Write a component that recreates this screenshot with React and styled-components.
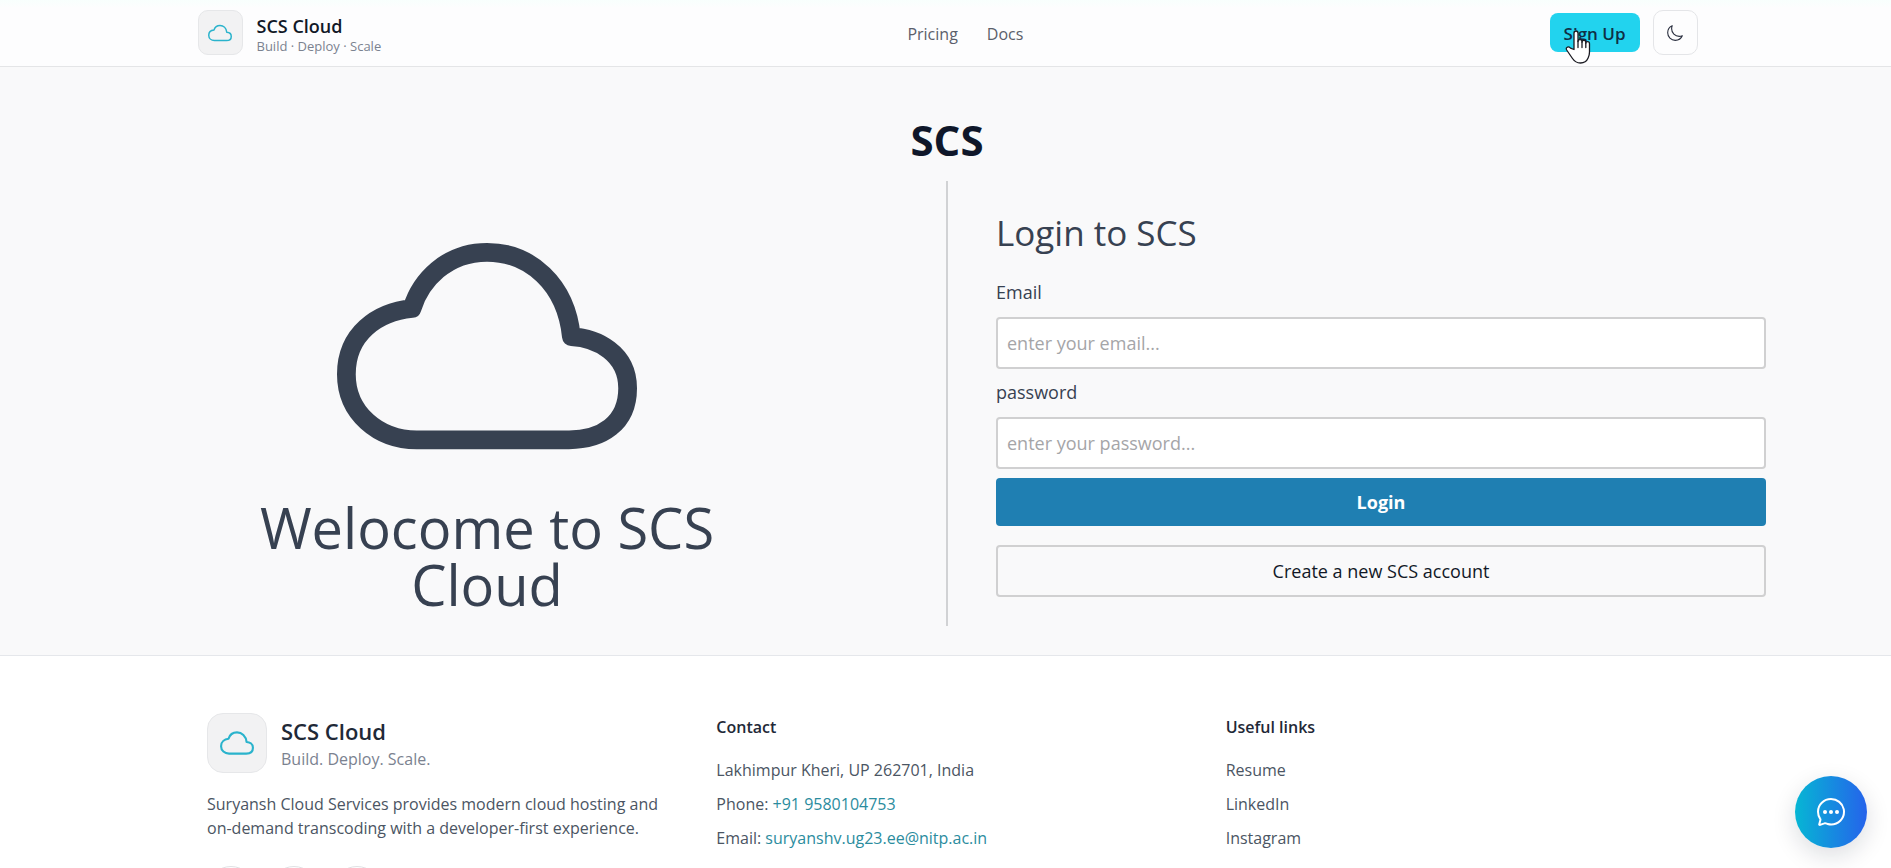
import React from "react";
import styled, { createGlobalStyle } from "styled-components";
import {
  IoCloudOutline,
  IoMoonOutline,
  IoChatbubbleEllipsesOutline,
  IoLogoGithub,
  IoLogoLinkedin,
  IoLogoInstagram,
} from "react-icons/io5";

const GlobalStyle = createGlobalStyle`
  *, *::before, *::after { box-sizing: border-box; }
  body {
    margin: 0;
    background: #ffffff;
    color: #374151;
    font-family: "Segoe UI", "Open Sans", "Noto Sans", sans-serif;
    font-size: 16px;
  }
  h1, h2, h3, p, ul { margin: 0; padding: 0; }
  a { color: inherit; text-decoration: none; }
  button, input { font-family: inherit; }
`;

const Header = styled.header`
  padding: 10px 0 11px 4px;
  background: linear-gradient(#f8fffd 0, #fdfdfe 8px);
  border-bottom: 1px solid #e4e5e7;
`;

const HeaderInner = styled.div`
  display: flex;
  align-items: center;
  justify-content: space-between;
  max-width: 1500px;
  margin: 0 auto;
`;

const Brand = styled.a`
  display: flex;
  align-items: center;
  gap: 14px;
`;

const LogoTile = styled.span`
  display: flex;
  align-items: center;
  justify-content: center;
  width: ${(p) => (p.$large ? 60 : 45)}px;
  height: ${(p) => (p.$large ? 60 : 45)}px;
  border: 1px solid #e6e7e9;
  border-radius: ${(p) => (p.$large ? 16 : 10)}px;
  background: #f2f2f3;
  color: #2ab3cc;
`;

const BrandText = styled.span`
  display: flex;
  flex-direction: column;
  padding-top: ${(p) => (p.$large ? 0 : 4)}px;
`;

const BrandName = styled.span`
  font-size: ${(p) => (p.$large ? 22 : 18)}px;
  line-height: ${(p) => (p.$large ? 32 : 22)}px;
  font-weight: 600;
  color: ${(p) => (p.$large ? "#1f2937" : "#111827")};
`;

const BrandTagline = styled.span`
  font-size: ${(p) => (p.$large ? 16 : 13)}px;
  line-height: ${(p) => (p.$large ? 24 : 18)}px;
  color: #7b8290;
`;

const Nav = styled.nav`
  display: flex;
  gap: 29px;
  padding-top: 2px;
  font-size: 16px;
  line-height: 24px;
  color: #5b5f6b;
`;

const Actions = styled.div`
  display: flex;
  align-items: center;
  gap: 13px;
`;

const SignUpButton = styled.button`
  position: relative;
  height: 39px;
  padding: 2px 14px 0;
  border: 0;
  border-radius: 8px;
  background: #22d3ee;
  color: #0f2f45;
  font-size: 17px;
  font-weight: 600;
`;

const Pointer = styled.svg`
  position: absolute;
  left: 15px;
  top: 17px;
  width: 26px;
  height: 34px;
  pointer-events: none;
`;

const ThemeButton = styled.button`
  display: flex;
  align-items: center;
  justify-content: center;
  width: 45px;
  height: 45px;
  padding: 0;
  border: 1px solid #e4e5e8;
  border-radius: 10px;
  background: #fdfdfe;
  color: #2b3040;
`;

const Main = styled.main`
  padding: 44px 0 29px 3px;
  background: #f9f9fa;
`;

const PageTitle = styled.h1`
  font-size: 42px;
  line-height: 57px;
  font-weight: 700;
  text-align: center;
  color: #0f172a;
`;

const Columns = styled.div`
  display: grid;
  grid-template-columns: 1fr 1fr;
  margin: 13px 25px 0 23px;
`;

const Welcome = styled.section`
  display: flex;
  flex-direction: column;
  align-items: center;
  gap: 3px;
  padding: 15px 0 0 2px;
  color: #374151;
`;

const WelcomeText = styled.h2`
  max-width: 500px;
  font-size: 56px;
  line-height: 57px;
  font-weight: 400;
  text-align: center;
`;

const LoginForm = styled.form`
  display: flex;
  flex-direction: column;
  padding: 26px 100px 29px 48px;
  border-left: 2px solid #d1d2d4;
`;

const FormTitle = styled.h2`
  margin-bottom: 19px;
  font-size: 35px;
  line-height: 52px;
  font-weight: 400;
`;

const Field = styled.div`
  display: flex;
  flex-direction: column;
  margin-bottom: 9px;
`;

const Label = styled.label`
  margin-bottom: 10px;
  font-size: 18px;
  line-height: 29px;
`;

const TextInput = styled.input`
  height: 52px;
  padding: 0 9px;
  border: 2px solid #d0d0d1;
  border-radius: 4px;
  background: #ffffff;
  font-size: 18px;
  color: #374151;
  &::placeholder { color: #a5a5a8; opacity: 1; }
`;

const PrimaryButton = styled.button`
  height: 48px;
  margin-bottom: 19px;
  border: 0;
  border-radius: 4px;
  background: #1f7fb2;
  color: #ffffff;
  font-size: 18px;
  font-weight: 700;
`;

const OutlineButton = styled.button`
  height: 52px;
  border: 2px solid #d0d0d1;
  border-radius: 4px;
  background: transparent;
  color: #111827;
  font-size: 18px;
`;

const Footer = styled.footer`
  padding: 57px 0 48px 3px;
  border-top: 1px solid #e5e7eb;
  background: #ffffff;
`;

const FooterInner = styled.div`
  display: grid;
  grid-template-columns: repeat(3, 1fr);
  gap: 48px;
  max-width: 1480px;
  margin: 0 auto;
`;

const About = styled.p`
  margin-top: 19px;
  line-height: 24px;
  color: #4b5563;
`;

const Socials = styled.div`
  display: flex;
  gap: 15px;
  margin-top: 26px;
`;

const SocialLink = styled.a`
  display: flex;
  align-items: center;
  justify-content: center;
  width: 48px;
  height: 48px;
  border: 1px solid #e0e1e4;
  border-radius: 50%;
  color: #4b5563;
`;

const FooterHeading = styled.h3`
  margin-bottom: 17px;
  font-size: 16px;
  line-height: 28px;
  font-weight: 600;
  color: #1f2937;
`;

const FooterList = styled.ul`
  list-style: none;
  color: #4b5563;
`;

const FooterItem = styled.li`
  padding-bottom: 10px;
  line-height: 24px;
`;

const AccentLink = styled.a`
  color: #2b8c9e;
`;

const ChatButton = styled.button`
  position: fixed;
  right: 24px;
  bottom: 20px;
  display: flex;
  align-items: center;
  justify-content: center;
  width: 72px;
  height: 72px;
  padding: 0;
  border: 0;
  border-radius: 50%;
  background: linear-gradient(90deg, #06b6d4, #2563eb);
  color: #ffffff;
  box-shadow: 0 8px 24px rgba(15, 23, 42, 0.14);
`;

function BrandMark({ tagline, large }) {
  return (
    <Brand href="#">
      <LogoTile $large={large}>
        <IoCloudOutline size={large ? 34 : 24} />
      </LogoTile>
      <BrandText $large={large}>
        <BrandName $large={large}>SCS Cloud</BrandName>
        <BrandTagline $large={large}>{tagline}</BrandTagline>
      </BrandText>
    </Brand>
  );
}

function HandPointer() {
  return (
    <Pointer viewBox="0 0 26 34" aria-hidden="true">
      <path
        d="M9 19.5V3.2C9 1.8 9.8 1 11 1s2 .8 2 2.200V11.500c0-1.200.9-1.900 2-1.900s2 .7 2 1.900v.7c0-1.100.8-1.800 1.900-1.800s1.900.7 1.900 1.800v1.100c.1-1 .8-1.600 1.800-1.600 1.200 0 1.900.8 1.900 2V22c0 2.500-.4 4-1.400 6-1.300 3-3.600 5-7.600 5-3.600 0-6-1.500-8-4.500L2 20.500c-.8-1.200-1-2.400-.1-3.100 1-.8 2.500-.4 3.600.7z"
        fill="#ffffff"
        stroke="#1b1b22"
        strokeWidth="1.300"
        strokeLinejoin="round"
      />
      <path
        d="M13 11v6.500M17 12v5.500M20.800 13v4.500"
        fill="none"
        stroke="#1b1b22"
        strokeWidth="1.300"
        strokeLinecap="round"
      />
    </Pointer>
  );
}

export default function App() {
  return (
    <>
      <GlobalStyle />
      <Header>
        <HeaderInner>
          <BrandMark tagline="Build · Deploy · Scale" />
          <Nav>
            <a href="#pricing">Pricing</a>
            <a href="#docs">Docs</a>
          </Nav>
          <Actions>
            <SignUpButton type="button">
              Sign Up
              <HandPointer />
            </SignUpButton>
            <ThemeButton type="button" aria-label="Toggle dark mode">
              <IoMoonOutline size={18} />
            </ThemeButton>
          </Actions>
        </HeaderInner>
      </Header>

      <Main>
        <PageTitle>SCS</PageTitle>
        <Columns>
          <Welcome>
            <IoCloudOutline size={300} />
            <WelcomeText>Welocome to SCS Cloud</WelcomeText>
          </Welcome>
          <LoginForm onSubmit={(e) => e.preventDefault()}>
            <FormTitle>Login to SCS</FormTitle>
            <Field>
              <Label htmlFor="email">Email</Label>
              <TextInput id="email" type="email" placeholder="enter your email..." />
            </Field>
            <Field>
              <Label htmlFor="password">password</Label>
              <TextInput id="password" type="password" placeholder="enter your password..." />
            </Field>
            <PrimaryButton type="submit">Login</PrimaryButton>
            <OutlineButton type="button">Create a new SCS account</OutlineButton>
          </LoginForm>
        </Columns>
      </Main>

      <Footer>
        <FooterInner>
          <div>
            <BrandMark large tagline="Build. Deploy. Scale." />
            <About>
              Suryansh Cloud Services provides modern cloud hosting and on-demand
              transcoding with a developer-first experience.
            </About>
            <Socials>
              <SocialLink href="#github" aria-label="GitHub">
                <IoLogoGithub size={20} />
              </SocialLink>
              <SocialLink href="#linkedin" aria-label="LinkedIn">
                <IoLogoLinkedin size={20} />
              </SocialLink>
              <SocialLink href="#instagram" aria-label="Instagram">
                <IoLogoInstagram size={20} />
              </SocialLink>
            </Socials>
          </div>
          <div>
            <FooterHeading>Contact</FooterHeading>
            <FooterList>
              <FooterItem>Lakhimpur Kheri, UP 262701, India</FooterItem>
              <FooterItem>
                Phone: <AccentLink href="tel:+919580104753">+91 9580104753</AccentLink>
              </FooterItem>
              <FooterItem>
                Email:{" "}
                <AccentLink href="mailto:suryanshv.ug23.ee@nitp.ac.in">
                  suryanshv.ug23.ee@nitp.ac.in
                </AccentLink>
              </FooterItem>
            </FooterList>
          </div>
          <div>
            <FooterHeading>Useful links</FooterHeading>
            <FooterList>
              <FooterItem><a href="#resume">Resume</a></FooterItem>
              <FooterItem><a href="#linkedin">LinkedIn</a></FooterItem>
              <FooterItem><a href="#instagram">Instagram</a></FooterItem>
            </FooterList>
          </div>
        </FooterInner>
      </Footer>

      <ChatButton type="button" aria-label="Open chat">
        <IoChatbubbleEllipsesOutline size={32} />
      </ChatButton>
    </>
  );
}
